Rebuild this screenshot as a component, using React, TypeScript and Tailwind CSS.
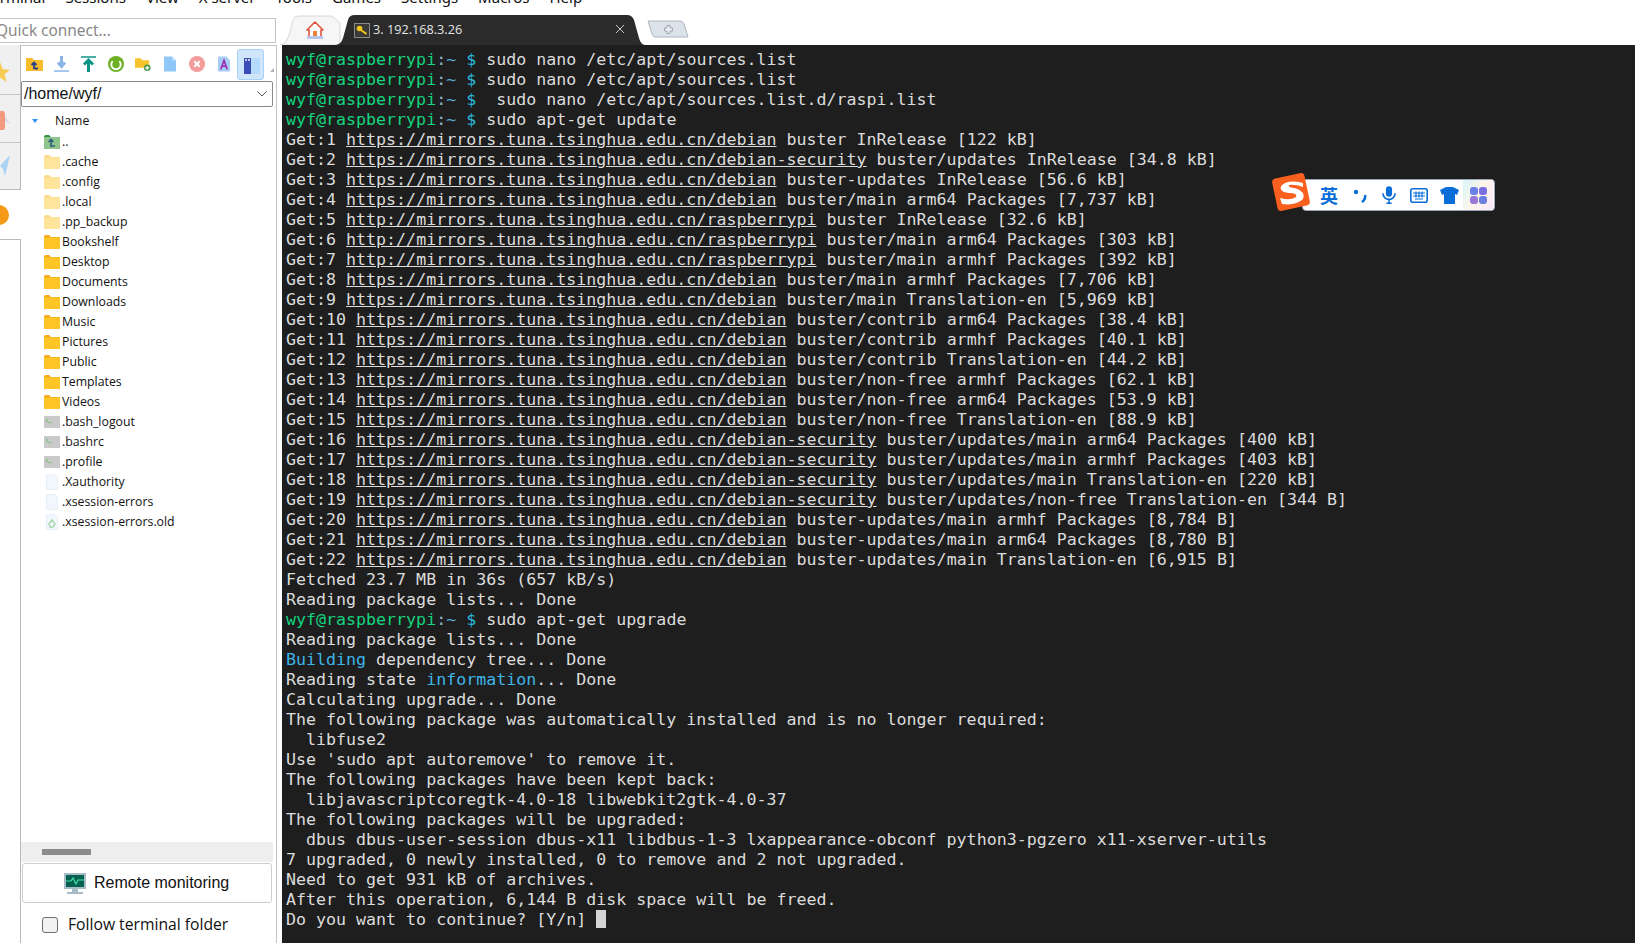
import type { ReactNode } from "react";

const MENU = ["Terminal", "Sessions", "View", "X server", "Tools", "Games", "Settings", "Macros", "Help"];

const FILES: { name: string; kind: "up" | "hidden" | "folder" | "term" | "doc" | "recycle" }[] = [
  { name: "..", kind: "up" },
  { name: ".cache", kind: "hidden" },
  { name: ".config", kind: "hidden" },
  { name: ".local", kind: "hidden" },
  { name: ".pp_backup", kind: "hidden" },
  { name: "Bookshelf", kind: "folder" },
  { name: "Desktop", kind: "folder" },
  { name: "Documents", kind: "folder" },
  { name: "Downloads", kind: "folder" },
  { name: "Music", kind: "folder" },
  { name: "Pictures", kind: "folder" },
  { name: "Public", kind: "folder" },
  { name: "Templates", kind: "folder" },
  { name: "Videos", kind: "folder" },
  { name: ".bash_logout", kind: "term" },
  { name: ".bashrc", kind: "term" },
  { name: ".profile", kind: "term" },
  { name: ".Xauthority", kind: "doc" },
  { name: ".xsession-errors", kind: "doc" },
  { name: ".xsession-errors.old", kind: "recycle" },
];

function Folder({ fill, tab }: { fill: string; tab: string }) {
  return (
    <svg width="16" height="14" viewBox="0 0 16 14">
      <path d="M0 2 Q0 0 2 0 H5 L7 2 H16 V13 Q16 14 15 14 H1 Q0 14 0 13 Z" fill={tab} />
      <rect x="0" y="2.5" width="16" height="11.5" rx="1" fill={fill} />
    </svg>
  );
}

function FileIcon({ kind }: { kind: string }) {
  if (kind === "folder") return <Folder fill="#ffc526" tab="#f6a81c" />;
  if (kind === "hidden") return <Folder fill="#ffe49b" tab="#fbd98a" />;
  if (kind === "up")
    return (
      <svg width="16" height="14" viewBox="0 0 16 14">
        <path d="M0 2 Q0 0 2 0 H5 L7 2 H16 V14 H0 Z" fill="#2f8f3f" />
        <rect x="0" y="2" width="16" height="12" rx="1" fill="#8fc48c" />
        <path d="M7 12 V5 M4.5 7 L7 4.5 L9.5 7 M7 11 H11" stroke="#2f5f80" strokeWidth="1.6" fill="none" />
      </svg>
    );
  if (kind === "term")
    return (
      <svg width="16" height="12" viewBox="0 0 16 12">
        <rect width="16" height="12" fill="#c9c9c9" />
        <path d="M2 3 L4 4.5 L2 6 M4.5 6.5 H7" stroke="#6fbf73" strokeWidth="1" fill="none" />
      </svg>
    );
  return (
    <svg width="14" height="16" viewBox="0 0 14 16">
      <path d="M1.5 0.5 H9 L12.5 4 V15.5 H1.5 Z" fill="#f2f7fd" stroke="#e6eef8" />
      {kind === "recycle" && <path d="M4 10 L7 6 L10 10 L8 13 H5 Z" fill="none" stroke="#a9d8b0" strokeWidth="1.5" />}
    </svg>
  );
}

const TOOLBAR: ReactNode[] = [
  <svg width="17" height="16" viewBox="0 0 17 16">
    <path d="M0 2 H6 L8 4 H17 V15 H0 Z" fill="#f8bb2b" />
    <path d="M8 13 V7 M5.5 9 L8 6.5 L10.5 9 M8 12.5 H12" stroke="#27408b" strokeWidth="1.8" fill="none" />
  </svg>,
  <svg width="15" height="16" viewBox="0 0 15 16">
    <path d="M7.5 0 V9 M4 6.5 L7.5 10.5 L11 6.5" stroke="#8db4e8" strokeWidth="3" fill="none" />
    <path d="M0 15 H15" stroke="#8db4e8" strokeWidth="1.5" />
  </svg>,
  <svg width="15" height="16" viewBox="0 0 15 16">
    <path d="M0 1 H15" stroke="#0d9488" strokeWidth="1.5" />
    <path d="M7.5 16 V6 M3 8.5 L7.5 4 L12 8.5" stroke="#0d9488" strokeWidth="3" fill="none" />
  </svg>,
  <svg width="16" height="16" viewBox="0 0 17 17">
    <circle cx="8.5" cy="8.5" r="8.5" fill="#6cb023" />
    <path d="M5 5.5 A5 5 0 1 0 12 5.5" stroke="#fff" strokeWidth="2" fill="none" />
  </svg>,
  <svg width="16" height="16" viewBox="0 0 17 16">
    <path d="M0 2 H6 L8 4 H15 V12 H0 Z" fill="#f8c42b" />
    <circle cx="13" cy="12" r="3.5" fill="#4c9a4a" />
    <path d="M11 12 H15 M13 10 V14" stroke="#fff" strokeWidth="1.3" />
  </svg>,
  <svg width="12" height="16" viewBox="0 0 13 16">
    <path d="M0 0 H9 L13 4 V16 H0 Z" fill="#90c6f8" />
    <path d="M9 0 L13 4 H9 Z" fill="#d6eafc" />
  </svg>,
  <svg width="16" height="16" viewBox="0 0 16 16">
    <circle cx="8" cy="8" r="8" fill="#f49b9b" />
    <path d="M5.3 5.3 L10.7 10.7 M10.7 5.3 L5.3 10.7" stroke="#fff" strokeWidth="2" />
  </svg>,
  <svg width="12" height="16" viewBox="0 0 13 16">
    <path d="M0 0 H9 L13 4 V16 H0 Z" fill="#a5cdf5" />
    <path d="M3 14 L6.5 4 L10 14 M4.2 10.5 H8.8" stroke="#9c27b0" strokeWidth="1.7" fill="none" />
  </svg>,
];

function Prompt({ cmd }: { cmd: string }) {
  return (
    <>
      <span className="text-[#14d47f]">wyf@raspberrypi</span>
      <span className="text-[#8fb8c8]">:</span>
      <span className="text-[#5aa9d0]">~ </span>
      <span className="text-[#29b8db]">$ </span>
      {cmd}
    </>
  );
}

const getLine = (n: number, url: string, rest: string): ReactNode => (
  <>
    {`Get:${n} `}
    <span className="underline">{url}</span>
    {` ${rest}`}
  </>
);

const D = "https://mirrors.tuna.tsinghua.edu.cn/debian";
const S = "https://mirrors.tuna.tsinghua.edu.cn/debian-security";
const R = "http://mirrors.tuna.tsinghua.edu.cn/raspberrypi";

const LINES: ReactNode[] = [
  <Prompt cmd="sudo nano /etc/apt/sources.list" />,
  <Prompt cmd="sudo nano /etc/apt/sources.list" />,
  <Prompt cmd=" sudo nano /etc/apt/sources.list.d/raspi.list" />,
  <Prompt cmd="sudo apt-get update" />,
  getLine(1, D, "buster InRelease [122 kB]"),
  getLine(2, S, "buster/updates InRelease [34.8 kB]"),
  getLine(3, D, "buster-updates InRelease [56.6 kB]"),
  getLine(4, D, "buster/main arm64 Packages [7,737 kB]"),
  getLine(5, R, "buster InRelease [32.6 kB]"),
  getLine(6, R, "buster/main arm64 Packages [303 kB]"),
  getLine(7, R, "buster/main armhf Packages [392 kB]"),
  getLine(8, D, "buster/main armhf Packages [7,706 kB]"),
  getLine(9, D, "buster/main Translation-en [5,969 kB]"),
  getLine(10, D, "buster/contrib arm64 Packages [38.4 kB]"),
  getLine(11, D, "buster/contrib armhf Packages [40.1 kB]"),
  getLine(12, D, "buster/contrib Translation-en [44.2 kB]"),
  getLine(13, D, "buster/non-free armhf Packages [62.1 kB]"),
  getLine(14, D, "buster/non-free arm64 Packages [53.9 kB]"),
  getLine(15, D, "buster/non-free Translation-en [88.9 kB]"),
  getLine(16, S, "buster/updates/main arm64 Packages [400 kB]"),
  getLine(17, S, "buster/updates/main armhf Packages [403 kB]"),
  getLine(18, S, "buster/updates/main Translation-en [220 kB]"),
  getLine(19, S, "buster/updates/non-free Translation-en [344 B]"),
  getLine(20, D, "buster-updates/main armhf Packages [8,784 B]"),
  getLine(21, D, "buster-updates/main arm64 Packages [8,780 B]"),
  getLine(22, D, "buster-updates/main Translation-en [6,915 B]"),
  "Fetched 23.7 MB in 36s (657 kB/s)",
  "Reading package lists... Done",
  <Prompt cmd="sudo apt-get upgrade" />,
  "Reading package lists... Done",
  <>
    <span className="text-[#3db5e8]">Building</span> dependency tree... Done
  </>,
  <>
    Reading state <span className="text-[#3db5e8]">information</span>... Done
  </>,
  "Calculating upgrade... Done",
  "The following package was automatically installed and is no longer required:",
  "  libfuse2",
  "Use 'sudo apt autoremove' to remove it.",
  "The following packages have been kept back:",
  "  libjavascriptcoregtk-4.0-18 libwebkit2gtk-4.0-37",
  "The following packages will be upgraded:",
  "  dbus dbus-user-session dbus-x11 libdbus-1-3 lxappearance-obconf python3-pgzero x11-xserver-utils",
  "7 upgraded, 0 newly installed, 0 to remove and 2 not upgraded.",
  "Need to get 931 kB of archives.",
  "After this operation, 6,144 B disk space will be freed.",
  <>
    Do you want to continue? [Y/n] <span className="inline-block w-[10px] h-[18px] bg-[#d4d4d4] align-[-3px]" />
  </>,
];

function SogouBar() {
  return (
    <div className="absolute left-[1272px] top-[173px] w-[224px] h-[39px]">
      <div className="absolute left-[30px] top-[6px] w-[193px] h-[32px] bg-white rounded-sm border border-[#9aa4b8] flex items-center text-[#0a6ed8]">
        <span className="ml-[17px] w-[18px] text-[18px] font-bold leading-none font-['Noto_Sans_CJK_SC',sans-serif]">英</span>
        <svg className="ml-[14px]" width="16" height="16" viewBox="0 0 16 16">
          <circle cx="4" cy="5" r="2.2" fill="#0a6ed8" />
          <path d="M13 8 Q14 12 10 15" stroke="#0a6ed8" strokeWidth="2.5" fill="none" />
        </svg>
        <svg className="ml-[14px]" width="14" height="20" viewBox="0 0 16 20">
          <rect x="4.5" y="0" width="7" height="12" rx="3.5" fill="#0a6ed8" />
          <path d="M1 8 A7 7 0 0 0 15 8 M8 15 V20 M5 19.5 H11" stroke="#0a6ed8" strokeWidth="1.8" fill="none" />
        </svg>
        <svg className="ml-[14px]" width="18" height="15" viewBox="0 0 18 15">
          <rect x="0.8" y="0.8" width="16.4" height="13.4" rx="2" fill="none" stroke="#0a6ed8" strokeWidth="1.6" />
          <path d="M3 5 H15 M3 8 H15 M6 3.5 V9.5 M9 3.5 V9.5 M12 3.5 V9.5 M5 11 H13" stroke="#0a6ed8" strokeWidth="1.2" />
        </svg>
        <svg className="ml-[12px]" width="19" height="17" viewBox="0 0 19 17">
          <path d="M6 0 H13 L19 3 L17 8 L15 7 V17 H4 V7 L2 8 L0 3 Z" fill="#0a6ed8" />
        </svg>
        <div className="ml-[4px] w-[30px] h-[30px] flex items-center justify-center bg-[linear-gradient(120deg,#d6f5f8,#fff6ea,#f6e6fa)]">
          <svg width="17" height="17" viewBox="0 0 17 17">
            <rect x="0" y="0" width="8" height="8" rx="3" fill="#6a7fe8" />
            <rect x="9" y="0" width="8" height="8" rx="3" fill="#7a6fe0" />
            <rect x="0" y="9" width="8" height="8" rx="3" fill="#9a78d8" />
            <rect x="9" y="9" width="8" height="8" rx="3" fill="#6a80e0" />
          </svg>
        </div>
      </div>
      <svg className="absolute left-0 top-0" width="40" height="39" viewBox="0 0 40 39">
        <rect x="2.5" y="2.5" width="33" height="33" rx="4" fill="#f9601f" transform="rotate(-12 19 19)" />
        <path d="M31 10 Q16 6 9 13 Q7 19 17 20 Q26 20 24 24 Q18 28 8 25 L10 31 Q24 33 31 26 Q34 18 22 15 Q15 14 17 12 Q23 11 31 14 Z" fill="#fff" />
      </svg>
    </div>
  );
}

export default function App() {
  return (
    <div className="relative w-[1635px] h-[943px] overflow-hidden bg-white flex flex-col font-['Noto_Sans',sans-serif]">
      {/* Menu bar, cut by the top of the shot */}
      <div className="h-[10px] shrink-0 border-b border-[#e6e6e6] overflow-hidden flex -mb-px">
        <div className="flex gap-[20px] -mt-[13px] -ml-[16px] text-[15px] leading-[20px] text-[#111]">
          {MENU.map((m) => (
            <span key={m}>{m}</span>
          ))}
        </div>
      </div>

      {/* Quick connect + tabs */}
      <div className="h-[36px] shrink-0 flex bg-white">
        <div className="w-[276px] shrink-0 pt-[9px]">
          <div className="h-[25px] border border-[#c4c4c4] border-l-0 text-[15.4px] leading-[23px] text-[#888] overflow-hidden whitespace-nowrap -indent-[4px]">
            Quick connect...
          </div>
        </div>
        <div className="flex items-end pl-[4px] min-w-0">
          <div className="relative w-[62px] h-[30px] flex items-center pl-[26px]">
            <svg className="absolute inset-0" width="62" height="30" viewBox="0 0 62 30">
              <path d="M0 30 Q6 29 9 20 L13 5 Q14 1 20 1 H52 L60 8 V30 Z" fill="#f6f6f6" stroke="#d8d8d8" />
            </svg>
            <svg className="relative" width="18" height="18" viewBox="0 0 18 18">
              <path d="M9 1 L1 9 H3 V17 H15 V9 H17 Z" fill="#fff" stroke="#e0533d" strokeWidth="1.6" strokeLinejoin="round" />
              <rect x="7" y="10" width="4" height="7" fill="#e8803a" />
              <rect x="1" y="15" width="16" height="3" fill="#b8c4e8" />
            </svg>
          </div>
          <div className="relative w-[310px] h-[30px] -ml-[7px] flex items-center pl-[19px]">
            <svg className="absolute inset-0" width="310" height="30" viewBox="0 0 310 30">
              <path d="M0 30 Q6 30 8 23 L13 5 Q14 0 20 0 H292 Q297 0 299 5 L304 23 Q306 30 310 30 Z" fill="#2b2b2b" />
            </svg>
            <span className="relative w-[16px] h-[15px] border border-[#8a8a8a] bg-[#3a3a3a] flex items-center justify-center mr-[3px]">
              <svg width="12" height="10" viewBox="0 0 12 10">
                <circle cx="3.5" cy="3.5" r="2.8" fill="#f5c518" />
                <path d="M5 5 L10.5 9" stroke="#f5c518" strokeWidth="2" />
              </svg>
            </span>
            <span className="relative text-[12.7px] text-[#e6e6e6] font-['Open_Sans',sans-serif]">3. 192.168.3.26</span>
            <svg className="absolute left-[280px] top-[9px]" width="10" height="10" viewBox="0 0 10 10">
              <path d="M1 1 L9 9 M9 1 L1 9" stroke="#c8c8c8" strokeWidth="1" />
            </svg>
          </div>
          <div className="relative w-[42px] h-[18px] ml-[2px] mb-[7px] flex items-center justify-center">
            <svg className="absolute inset-0" width="42" height="18" viewBox="0 0 42 18">
              <path d="M1 1 H33 Q36 1 37 4 L41 17 H8 Q6 17 5 14 Z" fill="#dce2ea" stroke="#aeb6c2" />
            </svg>
            <svg className="relative" width="9" height="9" viewBox="0 0 9 9">
              <path d="M3 0.5 H6 V3 H8.5 V6 H6 V8.5 H3 V6 H0.5 V3 H3 Z" fill="#eef0f3" stroke="#8e96a2" strokeWidth="0.8" />
            </svg>
          </div>
        </div>
      </div>

      <div className="flex-1 flex min-h-0">
        {/* Left icon strip */}
        <div className="w-[21px] shrink-0 flex flex-col overflow-hidden">
          <div className="h-[50px] bg-[#f0f0f0] border-r border-r-[#b9b9b9] border-b border-b-[#c4c4c4] flex items-center pt-[5px]">
            <svg className="-ml-[10px] shrink-0" width="20" height="20" viewBox="0 0 18 18">
              <path d="M9 0 L11.5 6.5 L18 7 L13 11 L15 18 L9 14 L3 18 L5 11 L0 7 L6.5 6.5 Z" fill="#f6cc52" />
            </svg>
          </div>
          <div className="h-[48px] bg-[#f0f0f0] border-r border-r-[#b9b9b9] border-b border-b-[#c4c4c4] flex items-center overflow-hidden">
            <svg width="11" height="24" viewBox="0 0 11 24">
              <path d="M0 2 L10 17 L5 14 Z" fill="#d5d6ea" />
              <path d="M0 4 H3 Q5 4 5 8 V20 Q5 23 3 23 H0 Z" fill="#f39a80" />
            </svg>
          </div>
          <div className="h-[47px] bg-[#f0f0f0] border-r border-r-[#b9b9b9] border-b border-b-[#b9b9b9] flex items-center overflow-hidden">
            <svg width="11" height="22" viewBox="0 0 11 22">
              <path d="M0 11 L10 0 L5 21 L3 14 Z" fill="#a9d2f5" />
            </svg>
          </div>
          <div className="h-[50px] border-b border-b-[#b9b9b9] flex items-center overflow-hidden">
            <div className="-ml-[11px] w-[20px] h-[20px] shrink-0 rounded-full bg-[#f59a17]" />
          </div>
          <div className="flex-1 border-r border-r-[#b9b9b9]" />
        </div>

        {/* Files panel */}
        <div className="w-[256px] shrink-0 border-r border-t border-[#c4c4c4] flex flex-col">
          <div className="h-[35px] shrink-0 flex items-center relative">
            <div className="flex items-center">
              {TOOLBAR.map((icon, i) => (
                <span key={i} className="w-[27px] flex justify-center">
                  {icon}
                </span>
              ))}
            </div>
            <div className="absolute left-[216px] top-[3px] w-[27px] h-[31px] rounded-[3px] bg-[#cfe5fb] border border-[#a9d0f5] flex">
              <div className="ml-[6px] mt-[8px] w-[7px] h-[16px] bg-[#3b4cb8] flex justify-center gap-px pt-px">
                <span className="w-[2px] h-[2px] bg-[#c5cdf5]" />
                <span className="w-[2px] h-[2px] bg-[#c5cdf5]" />
              </div>
              <div className="mt-[8px] w-[9px] h-[16px] bg-[#b4dafc]" />
            </div>
            <div className="absolute left-[249px] top-[22px] w-0 h-0 border-l-[4px] border-l-transparent border-b-[4px] border-b-[#aab4c0]" />
          </div>
          <div className="w-[252px] h-[26px] shrink-0 border border-[#8a8a8a] rounded-[2px] flex items-center justify-between px-[2px] text-[16px] text-[#111] font-['Liberation_Sans',sans-serif]">
            /home/wyf/
            <svg className="mr-[3px]" width="10" height="6" viewBox="0 0 10 6">
              <path d="M0.5 0.5 L5 5 L9.5 0.5" stroke="#555" fill="none" />
            </svg>
          </div>
          <div className="flex-1 min-h-0 flex flex-col pt-[3px] text-[12.3px] text-[#111] font-['Open_Sans',sans-serif]">
            <div className="h-[22px] shrink-0 flex items-center pl-[11px]">
              <span className="w-0 h-0 border-x-[3.5px] border-x-transparent border-t-[4px] border-t-[#2f93ee]" />
              <span className="ml-[17px]">Name</span>
            </div>
            {FILES.map((f) => (
              <div key={f.name} className="h-[20px] shrink-0 flex items-center pl-[23px]">
                <span className="w-[16px] flex justify-center mr-[2px]">
                  <FileIcon kind={f.kind} />
                </span>
                {f.name}
              </div>
            ))}
          </div>
          <div className="h-[20px] shrink-0 bg-[#eeeeee] flex items-center pl-[21px] w-[252px]">
            <div className="w-[49px] h-[6px] bg-[#8c8c8c]" />
          </div>
          <div className="w-[250px] ml-[1px] h-[40px] shrink-0 mt-[1px] border border-[#cfcfcf] rounded-[3px] flex items-center pl-[41px] text-[16px] text-[#111] font-['Liberation_Sans',sans-serif]">
            <svg className="mr-[8px]" width="22" height="21" viewBox="0 0 22 21">
              <rect width="22" height="16" fill="#a8bcc8" />
              <rect x="2" y="2" width="18" height="12" fill="#06614e" />
              <path d="M2 8 H7 L9 5 L12 11 L14 7 H20" stroke="#3fe0a8" strokeWidth="1.2" fill="none" />
              <rect x="8" y="16" width="6" height="3" fill="#a8bcc8" />
              <rect x="3" y="19" width="16" height="2" fill="#a8bcc8" />
            </svg>
            Remote monitoring
          </div>
          <div className="h-[40px] shrink-0 flex items-center pl-[21px] pt-[3px] text-[15.7px] text-[#111] font-['Open_Sans',sans-serif]">
            <span className="w-[16px] h-[16px] rounded-[3px] border border-[#707070] bg-[#f2f2f2] mr-[10px]" />
            Follow terminal folder
          </div>
        </div>

        {/* Terminal */}
        <div className="w-[5px] shrink-0 bg-white" />
        <div className="flex-1 min-w-0 bg-[#1e1e1e] pl-[4px] pt-[5px] text-[16.64px] leading-[20px] text-[#dcdcdc] font-['DejaVu_Sans_Mono',monospace] whitespace-pre overflow-hidden">
          {LINES.map((l, i) => (
            <div key={i} className="h-[20px]">
              {l}
            </div>
          ))}
        </div>
      </div>

      <SogouBar />
    </div>
  );
}
